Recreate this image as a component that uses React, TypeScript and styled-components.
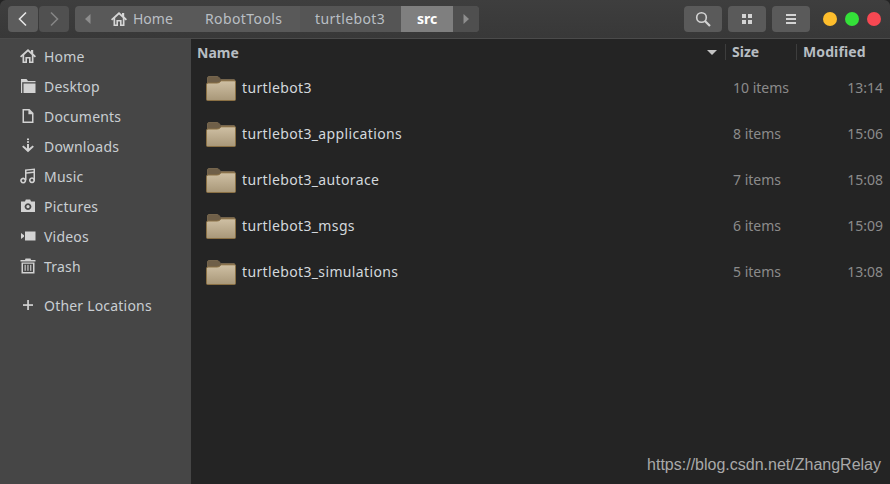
import React from "react"
import styled, { createGlobalStyle } from "styled-components"

const GlobalStyle = createGlobalStyle`
html, body {
    margin: 0;
    padding: 0;
    background: #242424;
}
* {
    box-sizing: border-box;
}
`

type IconProps = { size?: number }

const HomeIcon: React.FC<IconProps> = ({ size = 16 }) => (
    <svg width={size} height={size} viewBox="0 0 16 16" fill="currentColor">
        <path d="M8 1 L0 8.2 L1.2 9.4 L2.5 8.3 L2.5 15 L7 15 L7 10.5 L9 10.5 L9 15 L13.5 15 L13.5 8.3 L14.8 9.4 L16 8.2 L13.2 5.6 L13.2 2 L11 2 L11 3.7 Z M8 3.6 L11.8 7 L11.8 13.4 L10.6 13.4 L10.6 8.9 L5.4 8.9 L5.4 13.4 L4.2 13.4 L4.2 7 Z" fillRule="evenodd" />
    </svg>
)

const sidebarIcons: Record<string, React.ReactNode> = {
    Home: <HomeIcon />,
    Desktop: (
        <svg width="16" height="16" viewBox="0 0 16 16" fill="currentColor">
            <path d="M1 1 L6.5 1 L8 3 L15.5 3 L15.5 4.2 L2.2 4.2 L2.2 15 L1 15 Z" />
            <rect x="3.5" y="5.5" width="12" height="9.5" />
        </svg>
    ),
    Documents: (
        <svg width="16" height="16" viewBox="0 0 16 16" fill="currentColor">
            <path d="M2.5 1 L9.5 1 L13.5 5 L13.5 15 L2.5 15 Z M4 2.4 L4 13.6 L12 13.6 L12 6.2 L8.4 6.2 L8.4 2.4 Z" fillRule="evenodd" />
        </svg>
    ),
    Downloads: (
        <svg width="16" height="16" viewBox="0 0 16 16" fill="currentColor">
            <rect x="7" y="0.5" width="2" height="1.6" />
            <rect x="7" y="3.2" width="2" height="1.6" />
            <path d="M7 6 L9 6 L9 10.6 L12.6 7.4 L13.9 8.7 L8 14.2 L2.1 8.7 L3.4 7.4 L7 10.6 Z" />
        </svg>
    ),
    Music: (
        <svg width="16" height="16" viewBox="0 0 16 16" fill="currentColor">
            <path d="M5 1.5 L15 0.5 L15 12.5 L13.5 12.5 L13.5 5 L6.5 5.7 L6.5 12 L5 12 Z M6.5 2.8 L6.5 4.2 L13.5 3.5 L13.5 2.1 Z" fillRule="evenodd" />
            <path d="M3.2 9.6 A3 3 0 1 0 3.21 9.6 Z M3.2 11.2 A1.4 1.4 0 1 1 3.19 11.2 Z" fillRule="evenodd" />
            <path d="M12 9.2 A3 3 0 1 0 12.01 9.2 Z M12 10.8 A1.4 1.4 0 1 1 11.99 10.8 Z" fillRule="evenodd" />
        </svg>
    ),
    Pictures: (
        <svg width="16" height="16" viewBox="0 0 16 16" fill="currentColor">
            <path d="M1 3.5 L5 3.5 L5.8 1.5 L10.2 1.5 L11 3.5 L15 3.5 L15 14 L1 14 Z M8 5.2 A3.4 3.4 0 1 0 8.01 5.2 Z M8 7 A1.6 1.6 0 1 1 7.99 7 Z" fillRule="evenodd" />
        </svg>
    ),
    Videos: (
        <svg width="16" height="16" viewBox="0 0 16 16" fill="currentColor">
            <rect x="5" y="3.5" width="10.5" height="9" />
            <path d="M1 5 L4 7.2 L4 8.8 L1 11 Z" />
        </svg>
    ),
    Trash: (
        <svg width="16" height="16" viewBox="0 0 16 16" fill="currentColor">
            <path d="M5.5 0.5 L10.5 0.5 L11 2 L15.5 2 L15.5 3.4 L0.5 3.4 L0.5 2 L5 2 Z" />
            <path d="M1.5 4.4 L14.5 4.4 L14.5 15.5 L1.5 15.5 Z M3 5.8 L3 14.1 L13 14.1 L13 5.8 Z" fillRule="evenodd" />
            <rect x="4.6" y="6.8" width="1.1" height="6" />
            <rect x="7.4" y="6.8" width="1.1" height="6" />
            <rect x="10.2" y="6.8" width="1.1" height="6" />
        </svg>
    ),
    "Other Locations": (
        <svg width="16" height="16" viewBox="0 0 16 16" fill="currentColor">
            <rect x="7.2" y="3" width="1.7" height="10" />
            <rect x="3" y="7.2" width="10" height="1.7" />
        </svg>
    ),
}

const FolderIcon = () => (
    <svg width="30" height="25" viewBox="0 0 30 25">
        <defs>
            <linearGradient id="folderFront" x1="0" y1="0" x2="0" y2="1">
                <stop offset="0" stopColor="#cfc0a4" />
                <stop offset="1" stopColor="#a89778" />
            </linearGradient>
        </defs>
        <path d="M1.5 8 L1.5 2 Q1.5 0.5 3 0.5 L11 0.5 Q12.5 0.5 13.5 2 L14.5 3.5 L28 3.5 Q29 3.5 29 5 L29 9 Z" fill="#6f5f48" stroke="#75654d" strokeWidth="1" />
        <path d="M0.5 8.5 Q0.5 7 2 7 L11 7 Q13 7 14.5 5.5 L15.5 4.8 L28.5 4.8 Q29.5 4.8 29.5 6 L29.5 23.5 Q29.5 24.5 28.5 24.5 L1.5 24.5 Q0.5 24.5 0.5 23.5 Z" fill="url(#folderFront)" stroke="#8a7044" strokeWidth="1" />
    </svg>
)

const places = ["Home", "Desktop", "Documents", "Downloads", "Music", "Pictures", "Videos", "Trash"]

const files = [
    { name: "turtlebot3", size: "10 items", time: "13:14" },
    { name: "turtlebot3_applications", size: "8 items", time: "15:06" },
    { name: "turtlebot3_autorace", size: "7 items", time: "15:08" },
    { name: "turtlebot3_msgs", size: "6 items", time: "15:09" },
    { name: "turtlebot3_simulations", size: "5 items", time: "13:08" },
]

export default function App() {
    return (
        <Window>
            <GlobalStyle />
            <HeaderBar>
                <NavGroup>
                    <NavButton $enabled>
                        <svg width="12" height="16" viewBox="0 0 12 16" fill="none" stroke="currentColor" strokeWidth="1.6">
                            <path d="M9 1.5 L2.5 8 L9 14.5" />
                        </svg>
                    </NavButton>
                    <NavButton>
                        <svg width="12" height="16" viewBox="0 0 12 16" fill="none" stroke="currentColor" strokeWidth="1.6">
                            <path d="M3 1.5 L9.5 8 L3 14.5" />
                        </svg>
                    </NavButton>
                </NavGroup>
                <PathBar>
                    <PathArrow>
                        <svg width="6" height="10" viewBox="0 0 6 10" fill="currentColor"><path d="M5.5 0 L0 5 L5.5 10 Z" /></svg>
                    </PathArrow>
                    <PathHome>
                        <HomeIcon />
                        Home
                    </PathHome>
                    <PathRobot>RobotTools</PathRobot>
                    <PathTurtle>turtlebot3</PathTurtle>
                    <PathCurrent>src</PathCurrent>
                    <PathArrowEnd>
                        <svg width="6" height="10" viewBox="0 0 6 10" fill="currentColor"><path d="M0.5 0 L6 5 L0.5 10 Z" /></svg>
                    </PathArrowEnd>
                </PathBar>
                <Spacer />
                <ToolButton>
                    <svg width="16" height="16" viewBox="0 0 16 16" fill="none" stroke="#d4d4d4" strokeWidth="1.6">
                        <circle cx="6.5" cy="6.5" r="4.8" />
                        <path d="M10 10 L15 15" strokeWidth="2.2" />
                    </svg>
                </ToolButton>
                <ToolButton>
                    <svg width="12" height="12" viewBox="0 0 12 12" fill="#d4d4d4">
                        <rect x="1" y="1" width="4" height="4" />
                        <rect x="7" y="1" width="4" height="4" />
                        <rect x="1" y="7" width="4" height="4" />
                        <rect x="7" y="7" width="4" height="4" />
                    </svg>
                </ToolButton>
                <ToolButton>
                    <svg width="12" height="12" viewBox="0 0 12 12" fill="#d4d4d4">
                        <rect x="1" y="1" width="10" height="2" />
                        <rect x="1" y="5" width="10" height="2" />
                        <rect x="1" y="9" width="10" height="2" />
                    </svg>
                </ToolButton>
                <WindowDots>
                    <Dot $color="#fdbd2c" />
                    <Dot $color="#34e039" />
                    <Dot $color="#f64852" />
                </WindowDots>
            </HeaderBar>
            <Body>
                <Sidebar>
                    {places.map((place) => (
                        <SidebarRow key={place}>
                            <SidebarIcon>{sidebarIcons[place]}</SidebarIcon>
                            {place}
                        </SidebarRow>
                    ))}
                    <OtherRow>
                        <SidebarIcon>{sidebarIcons["Other Locations"]}</SidebarIcon>
                        Other Locations
                    </OtherRow>
                </Sidebar>
                <Content>
                    <ColumnHeader>
                        <NameColumn>
                            Name
                            <SortArrow />
                        </NameColumn>
                        <SizeColumn>Size</SizeColumn>
                        <ModifiedColumn>Modified</ModifiedColumn>
                    </ColumnHeader>
                    <FileList>
                        {files.map((file) => (
                            <FileRow key={file.name}>
                                <FolderSlot>
                                    <FolderIcon />
                                </FolderSlot>
                                <FileName>{file.name}</FileName>
                                <FileSize>{file.size}</FileSize>
                                <FileTime>{file.time}</FileTime>
                            </FileRow>
                        ))}
                    </FileList>
                    <Watermark>https://blog.csdn.net/ZhangRelay</Watermark>
                </Content>
            </Body>
        </Window>
    )
}

const Window = styled.div`
position: relative;
width: 890px;
height: 484px;
overflow: hidden;
display: flex;
flex-direction: column;
background: #242424;
font-family: "Noto Sans", "Open Sans", sans-serif;
font-size: 14px;
`

const HeaderBar = styled.div`
height: 39px;
flex-shrink: 0;
display: flex;
align-items: flex-start;
padding: 6px 9px 0 8px;
background: linear-gradient(#3e3e3e, #383838);
border-bottom: 1px solid #4b4b4b;
border-radius: 6px 6px 0 0;
`

const NavGroup = styled.div`
display: flex;
gap: 1px;
margin-right: 6px;
`

const NavButton = styled.div<{ $enabled?: boolean }>`
width: 30px;
height: 26px;
display: flex;
align-items: center;
justify-content: center;
background: ${(p) => (p.$enabled ? "#5c5c5c" : "#505050")};
color: ${(p) => (p.$enabled ? "#e6e6e6" : "#858585")};
border-radius: 4px;
`

const PathBar = styled.div`
width: 404px;
height: 26px;
display: flex;
align-items: center;
background: #595959;
border-radius: 4px;
overflow: hidden;
color: #b9bfc4;
line-height: 24px;
`

const PathArrow = styled.div`
width: 25px;
height: 100%;
display: flex;
align-items: center;
justify-content: center;
color: #8e8e8e;
`

const PathHome = styled.div`
width: 105px;
height: 100%;
display: flex;
align-items: center;
gap: 6px;
padding-left: 11px;
svg {
    color: #d6d6d6;
}
`

const PathRobot = styled.div`
width: 95px;
letter-spacing: 0.4px;
`

const PathTurtle = styled.div`
width: 101px;
height: 100%;
display: flex;
align-items: center;
padding-left: 15px;
background: #555555;
letter-spacing: 0.4px;
`

const PathCurrent = styled.div`
width: 52px;
height: 100%;
display: flex;
align-items: center;
justify-content: center;
background: #7f7f7f;
color: #ffffff;
font-weight: 700;
`

const PathArrowEnd = styled.div`
flex: 1;
height: 100%;
display: flex;
align-items: center;
justify-content: center;
background: #4f4f4f;
color: #8e8e8e;
`

const Spacer = styled.div`
flex: 1;
`

const ToolButton = styled.div`
width: 38px;
height: 26px;
margin-right: 6px;
display: flex;
align-items: center;
justify-content: center;
background: #5a5a5a;
border-radius: 4px;
`

const WindowDots = styled.div`
display: flex;
gap: 8px;
align-items: center;
height: 26px;
margin-left: 7px;
`

const Dot = styled.div<{ $color: string }>`
width: 14px;
height: 14px;
border-radius: 50%;
background: ${(p) => p.$color};
`

const Body = styled.div`
flex: 1;
display: flex;
min-height: 0;
`

const Sidebar = styled.div`
width: 191px;
flex-shrink: 0;
padding-top: 2px;
background: #464646;
color: #c9ced2;
letter-spacing: 0.2px;
`

const SidebarRow = styled.div`
height: 30px;
display: flex;
align-items: center;
padding-left: 20px;
`

const OtherRow = styled(SidebarRow)`
margin-top: 9px;
`

const SidebarIcon = styled.div`
width: 16px;
height: 16px;
margin-right: 8px;
color: #d2d2d2;
`

const Content = styled.div`
position: relative;
flex: 1;
min-width: 0;
background: #242424;
`

const ColumnHeader = styled.div`
height: 26px;
display: flex;
align-items: center;
color: #b7bdc2;
font-weight: 700;
`

const NameColumn = styled.div`
width: 534px;
height: 100%;
display: flex;
align-items: center;
justify-content: space-between;
padding: 0 8px 0 6px;
`

const SortArrow = styled.div`
width: 0;
height: 0;
border-left: 5px solid transparent;
border-right: 5px solid transparent;
border-top: 5px solid #c4c4c4;
`

const SizeColumn = styled.div`
width: 71px;
padding-left: 6px;
border-left: 1px solid #3d3d3d;
line-height: 16px;
`

const ModifiedColumn = styled.div`
flex: 1;
padding-left: 6px;
border-left: 1px solid #3d3d3d;
line-height: 16px;
white-space: nowrap;
letter-spacing: 0.1px;
`

const FileList = styled.div`
display: flex;
flex-direction: column;
margin-top: -1px;
`

const FileRow = styled.div`
height: 46px;
display: flex;
align-items: center;
`

const FolderSlot = styled.div`
width: 51px;
height: 25px;
margin-top: 3px;
padding-left: 15px;
flex-shrink: 0;
`

const FileName = styled.div`
width: 491px;
color: #d3d8dc;
letter-spacing: 0.36px;
`

const FileSize = styled.div`
width: 80px;
color: #8b8b8b;
`

const FileTime = styled.div`
width: 70px;
text-align: right;
color: #8b8b8b;
`

const Watermark = styled.div`
position: absolute;
right: 9px;
bottom: 10px;
color: #a9a9a9;
font-family: "Liberation Sans", Arial, sans-serif;
font-size: 16px;
white-space: nowrap;
`
